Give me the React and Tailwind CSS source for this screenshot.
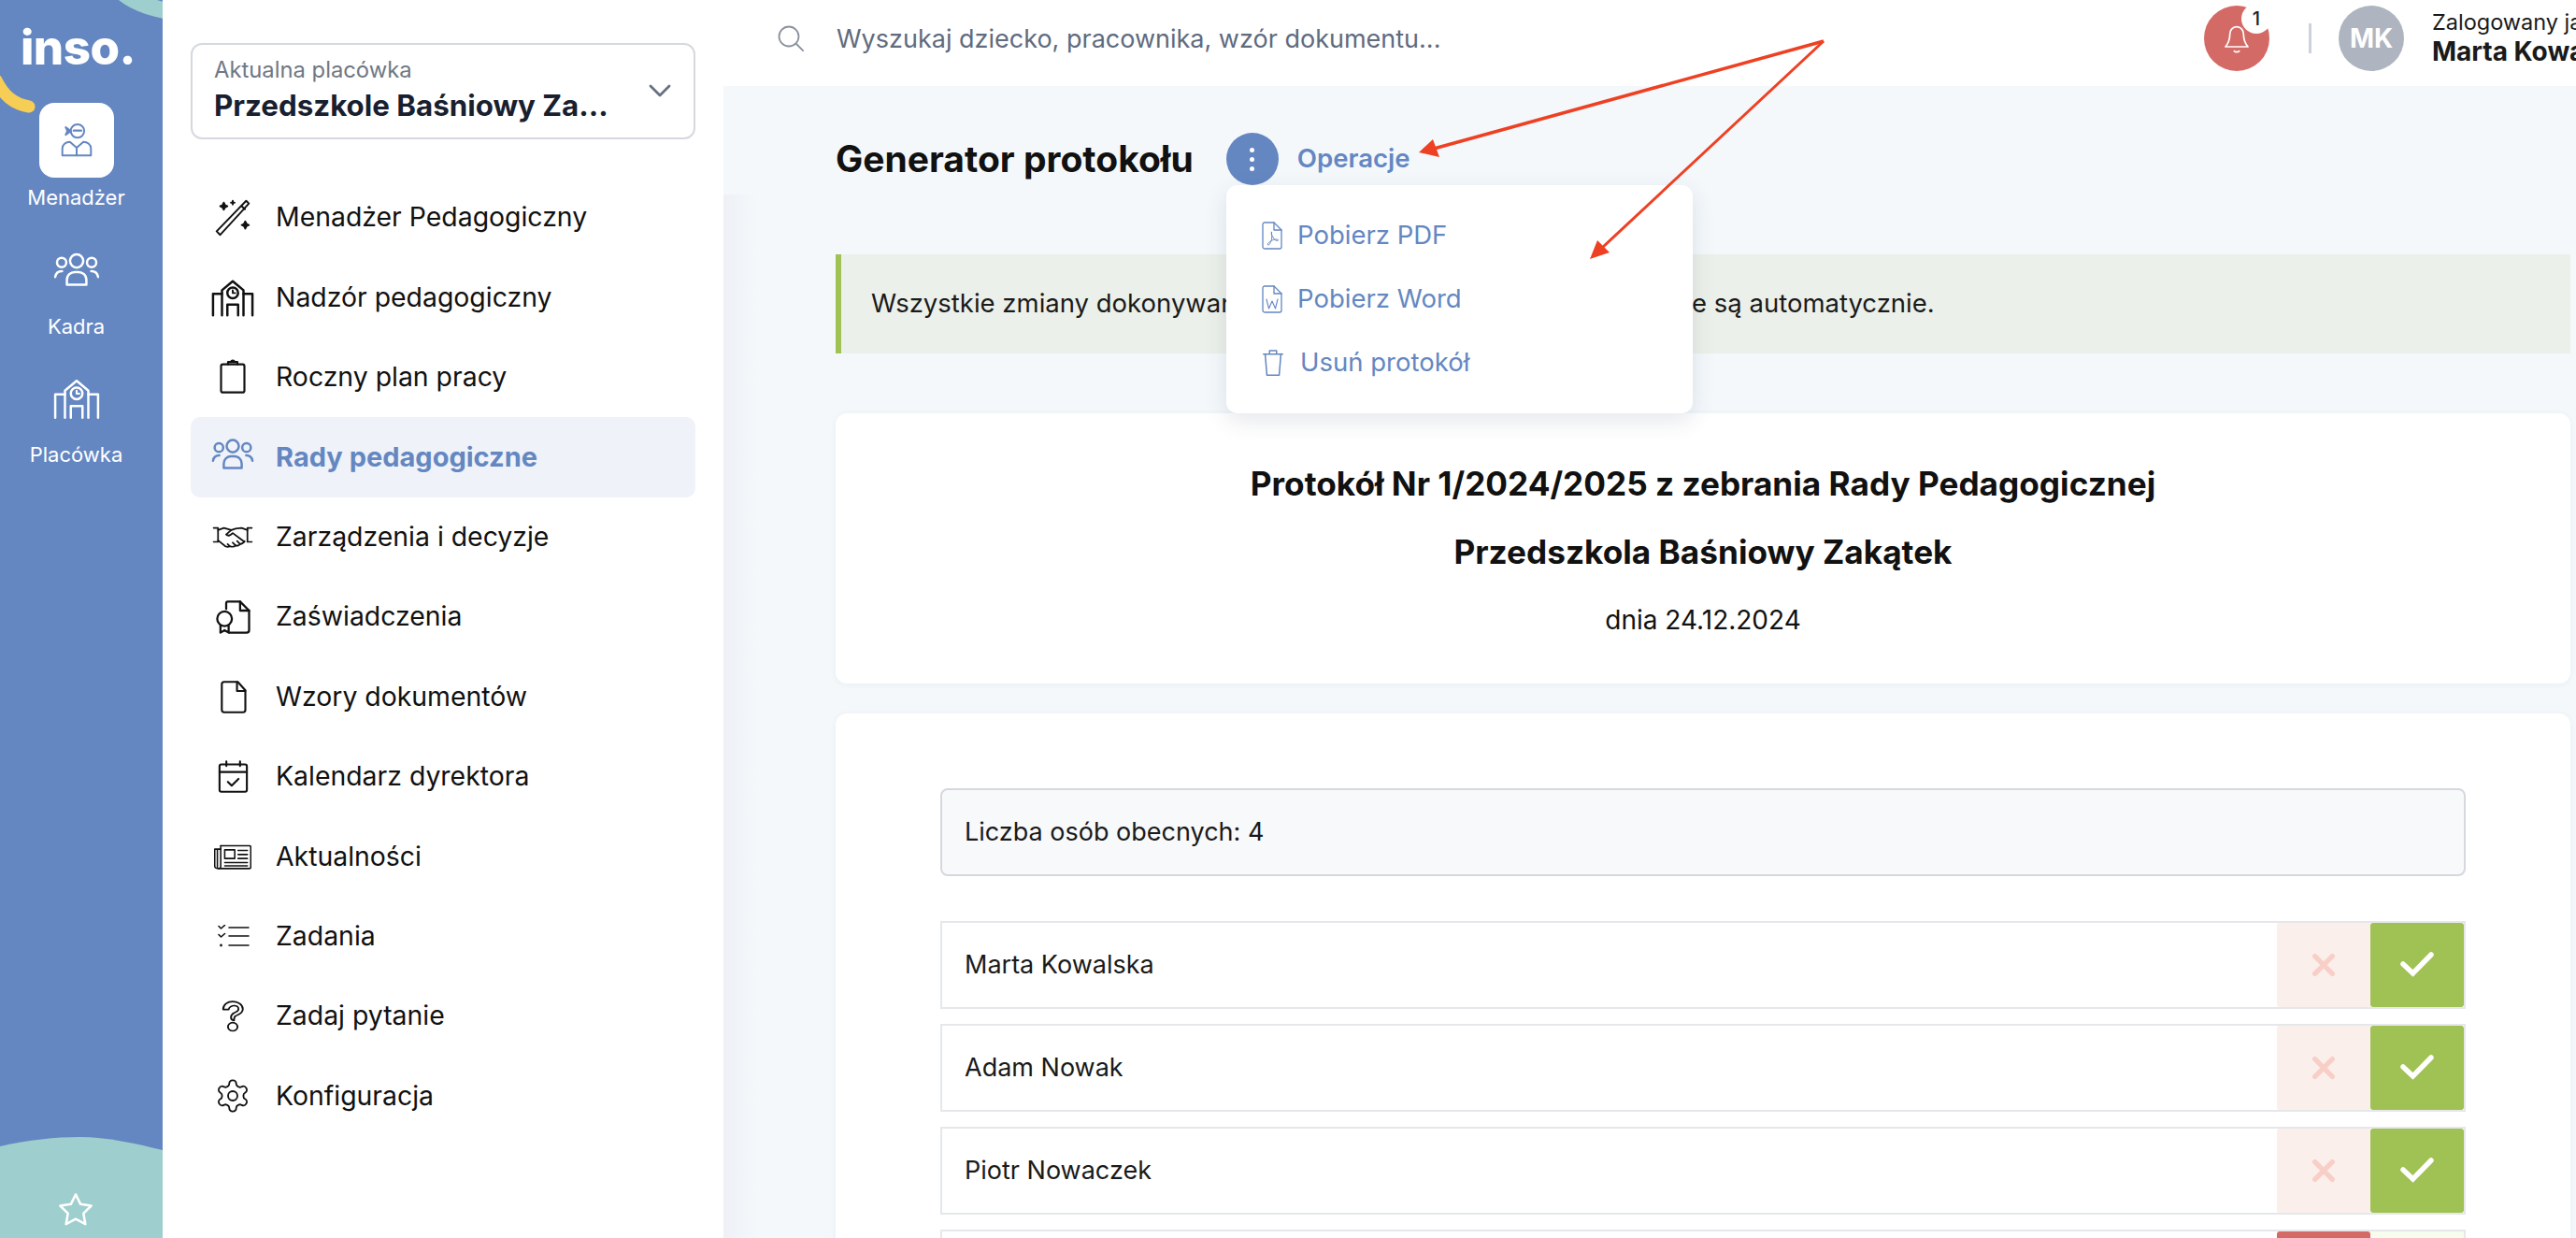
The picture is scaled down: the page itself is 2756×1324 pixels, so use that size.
import React from "react";

const font = { fontFamily: "Inter, 'Liberation Sans', sans-serif" };

const I = ({ children, className = "", vb = "0 0 24 24", sw = 1.3, par }) => (
  <svg viewBox={vb} preserveAspectRatio={par} fill="none" stroke="currentColor" strokeWidth={sw} strokeLinecap="round" strokeLinejoin="round" className={className}>
    {children}
  </svg>
);

const Wand = (p) => (
  <I {...p} sw={1}>
    <path d="M19.500 2.500 21 4 5 21.500 3 19.500Z" />
    <path d="M17 5.500 18.800 7.200" />
    <path d="M7 3.500c.3 1.300.7 1.700 2 2-1.300.3-1.700.7-2 2-.3-1.300-.7-1.700-2-2 1.300-.3 1.700-.7 2-2Z" fill="currentColor" />
    <path d="M12 2.500v2M11 3.500h2" />
    <path d="M19 14c.3 1.300.7 1.700 2 2-1.300.3-1.700.7-2 2-.3-1.300-.7-1.700-2-2 1.300-.3 1.700-.7 2-2Z" fill="currentColor" />
  </I>
);
const School = (p) => (
  <I {...p}>
    <path d="M1 22V10h5M23 22V10h-5" />
    <path d="M6 22V8l6-5 6 5v14" />
    <circle cx="12" cy="9.500" r="3" />
    <path d="M12 8v1.600h1.400" strokeWidth="1" />
    <path d="M9 22v-6h6v6" />
  </I>
);
const Users = (p) => (
  <I {...p}>
    <circle cx="12" cy="5.800" r="3.400" />
    <circle cx="4.300" cy="6.600" r="2.400" />
    <circle cx="19.700" cy="6.600" r="2.400" />
    <path d="M7 18v-2.500C7 13 9 11.500 11 11.500h2c2 0 4 1.500 4 4V18Z" />
    <path d="M1 14c.3-2 1.800-3 3.500-3M23 14c-.3-2-1.800-3-3.500-3" />
  </I>
);
const Clip = (p) => (
  <I {...p}>
    <rect x="4.500" y="4" width="15" height="18" rx="1.200" />
    <path d="M9 4V2.500h6V4" />
    <path d="M11 2.500c0-1.200 2-1.200 2 0" />
  </I>
);
const Hands = (p) => (
  <I {...p} vb="0 0 28 16" sw={1.100}>
    <path d="M1 2h3v9.500H1M27 2h-3v9.500h3" />
    <path d="M4 3.500 8 2l5 1.500-3.500 3c1.500 1.500 3 .5 4.500-1l8 6" />
    <path d="M24 3.500 20 2l-4 .5-3 1" />
    <path d="M4 10.500l5 4c1 .5 2 .5 3 0 1.500.5 3 .5 4-.5 1.500.3 2.500 0 3-1 1.500 0 2.500-1 3-2" />
    <path d="m12 14.500-1.500-1.500M16 14l-2-2M19 13l-2-2" />
  </I>
);
const Cert = (p) => (
  <I {...p}>
    <path d="M8 7V3.500c0-.5.5-1 1-1h7.500L22 8v12c0 .8-.5 1.500-1.500 1.500H10" />
    <path d="M16.500 2.500V8H22" />
    <circle cx="7" cy="13" r="4.500" />
    <path d="M4.500 17v4.500L7 20l2.500 1.500V17" />
  </I>
);
const Doc = (p) => (
  <I {...p}>
    <path d="M4.500 3.500c0-.8.5-1.500 1.500-1.500h9l5 5.500V20.500c0 1-.7 1.500-1.500 1.500H6c-1 0-1.500-.7-1.500-1.500Z" />
    <path d="M14.500 2v6H20" />
  </I>
);
const Cal = (p) => (
  <I {...p}>
    <rect x="3" y="4" width="18" height="18" rx="1.200" />
    <path d="M3 9h18M7.500 2v3M16.500 2v3" />
    <path d="m8.500 15.500 2.500 2.500 4.500-4.500" />
  </I>
);
const News = (p) => (
  <I {...p} vb="0 0 28 20" sw={1.100}>
    <path d="M5 2h21.500c.5 0 1 .5 1 1v15c0 .5-.5 1-1 1H3c-1.500 0-2.500-1-2.500-2V4.500h4.500" />
    <path d="M5 2v15.500c0 1-1 1.500-1.500 1.500M2.500 5v13" />
    <rect x="8" y="5" width="7.500" height="6.500" />
    <path d="M18 5.500h7M18 8.500h7M18 11.500h7M8 14.500h17M8 17h17" />
  </I>
);
const Tasks = (p) => (
  <I {...p} vb="0 0 35 24" sw={1.600}>
    <path d="M13 3h21M13 12h21M13 22h21" />
    <path d="m2 1.500 2.500 2.500 4-3.500M2 10.500l2.500 2.500 4-3.500" />
    <circle cx="4.500" cy="22" r=".6" fill="currentColor" />
  </I>
);
const Quest = (p) => (
  <I {...p} vb="5 1 14 23" par="none" sw={1.100}>
    <path d="M6 7.500C6 4 8.700 1.800 12 1.800s6.300 2.100 6.300 5.400c0 3-2.800 4-4.500 5-1 .6-1 1.500-1 3.300-1.500-.1-1.900-1-1.900-2.300 0-1.500.7-2.400 2-3.200 1-.6 2.700-1.300 2.700-2.800 0-1.600-1.300-2.500-2.700-2.500S9.500 5.800 9.500 7.500Z" />
    <circle cx="12" cy="20" r="3" />
  </I>
);
const Gear = (p) => (
  <I {...p} sw={1.100}>
    <path d="M12.220 2h-.44a2 2 0 0 0-2 2v.18a2 2 0 0 1-1 1.730l-.43.25a2 2 0 0 1-2 0l-.15-.08a2 2 0 0 0-2.730.73l-.22.380a2 2 0 0 0 .73 2.730l.15.100a2 2 0 0 1 1 1.720v.510a2 2 0 0 1-1 1.740l-.15.090a2 2 0 0 0-.73 2.730l.22.380a2 2 0 0 0 2.730.730l.15-.080a2 2 0 0 1 2 0l.43.250a2 2 0 0 1 1 1.730V20a2 2 0 0 0 2 2h.44a2 2 0 0 0 2-2v-.18a2 2 0 0 1 1-1.730l.43-.25a2 2 0 0 1 2 0l.15.080a2 2 0 0 0 2.730-.730l.22-.390a2 2 0 0 0-.73-2.730l-.15-.080a2 2 0 0 1-1-1.740v-.500a2 2 0 0 1 1-1.740l.15-.090a2 2 0 0 0 .73-2.730l-.22-.380a2 2 0 0 0-2.730-.730l-.15.080a2 2 0 0 1-2 0l-.43-.250a2 2 0 0 1-1-1.730V4a2 2 0 0 0-2-2z" />
    <circle cx="12" cy="12" r="3" />
  </I>
);

const nav = [
  ["Menadżer Pedagogiczny", Wand, "w-[46px] h-[46px]"],
  ["Nadzór pedagogiczny", School, "w-[46px] h-[46px]"],
  ["Roczny plan pracy", Clip, "w-[40px] h-[40px]"],
  ["Rady pedagogiczne", Users, "w-[46px] h-[46px]"],
  ["Zarządzenia i decyzje", Hands, "w-[44px] h-[26px]"],
  ["Zaświadczenia", Cert, "w-[42px] h-[42px]"],
  ["Wzory dokumentów", Doc, "w-[39px] h-[39px]"],
  ["Kalendarz dyrektora", Cal, "w-[39px] h-[39px]"],
  ["Aktualności", News, "w-[40px] h-[30px]"],
  ["Zadania", Tasks, "w-[35px] h-[24px]"],
  ["Zadaj pytanie", Quest, "w-[24px] h-[34px]"],
  ["Konfiguracja", Gear, "w-[40px] h-[40px]"],
];

const X = ({ className }) => (
  <svg viewBox="0 0 24 24" fill="none" stroke="currentColor" strokeWidth="4.600" strokeLinecap="round" className={className}>
    <path d="M4 4 20 20M20 4 4 20" />
  </svg>
);
const Check = ({ className }) => (
  <svg viewBox="0 0 36 28" fill="none" stroke="currentColor" strokeWidth="5.500" strokeLinecap="round" strokeLinejoin="miter" className={className}>
    <path d="M3 14 13.500 24 33 4" />
  </svg>
);

const Row = ({ name }) => (
  <div className="flex h-[94px] items-stretch border-2 border-[#E6E7EB] bg-white">
    <div className="flex-1 flex items-center pl-[24px] text-[27px] text-[#1a1a1a]">{name}</div>
    <div className="w-[100px] bg-[#FBEFEC] flex items-center justify-center text-[#F8CFC7] rounded-l-[2px]">
      <X className="w-[28px] h-[28px]" />
    </div>
    <div className="w-[100px] bg-[#A0C154] flex items-center justify-center text-white rounded-[3px]">
      <Check className="w-[36px] h-[28px] -mt-[2px]" />
    </div>
  </div>
);

export default function App() {
  return (
    <div style={font} className="relative flex h-[1324px] w-[2756px] overflow-hidden bg-[#F4F8FB]">
      {/* rail */}
      <aside className="relative w-[174px] shrink-0 overflow-hidden bg-[#6487C2] text-white flex flex-col items-center pr-[11px]">
        <div className="absolute -top-[100px] left-[105px] h-[122px] w-[190px] rounded-[50%] border-[18px] border-[#9ECECD] border-t-0" />
        <svg className="absolute left-0 top-[80px] w-[40px] h-[44px]" viewBox="0 0 40 44" fill="none">
          <path d="M-4 6C4 22 14 31 31 34" stroke="#F6CE55" strokeWidth="13" strokeLinecap="round" />
        </svg>
        <svg className="absolute left-0 bottom-0 w-[174px] h-[108px]" viewBox="0 0 174 108" preserveAspectRatio="none">
          <path d="M0 10C30 3 60 0 85 0c30 0 60 7 89 14v94H0Z" fill="#9ECECD" />
        </svg>
        <div className="relative text-[51px] leading-none font-extrabold mt-[25px] h-[46px] tracking-[-0.5px] pl-[4px]">inso.</div>
        <div className="relative mt-[39px] w-[80px] h-[80px] rounded-[16px] bg-white flex items-center justify-center text-[#6487C2]">
          <svg viewBox="0 0 40 40" className="w-[36px] h-[40px]" fill="none" stroke="currentColor" strokeWidth="2.200" strokeLinejoin="round" strokeLinecap="round">
            <circle cx="21" cy="9" r="8" />
            <path d="M16.500 8.500h9" strokeWidth="2.600" />
            <path d="M13 9 7 4.500l2 4.500-2 4.500Z" fill="currentColor" />
            <path d="M3 38V30c0-5 4-8 9-8l8 7 8-7c5 0 9 3 9 8v8Z" />
            <path d="M20 29v9" />
          </svg>
        </div>
        <div className="relative mt-[7px] text-[22px] leading-[28px]">Menadżer</div>
        <Users className="relative mt-[42px] w-[50px] h-[50px] block" sw={1.200} />
        <div className="relative mt-[18px] text-[22px] leading-[28px]">Kadra</div>
        <School className="relative mt-[38px] w-[50px] h-[50px] block" sw={1.200} />
        <div className="relative mt-[21px] text-[22px] leading-[28px]">Placówka</div>
        <svg viewBox="0 0 24 24" className="absolute left-[60px] bottom-[10px] w-[42px] h-[40px]" fill="none" stroke="#fff" strokeWidth="1.500" strokeLinejoin="round">
          <path d="m12 2 3.100 6.300 6.900 1-5 4.900 1.200 6.900-6.200-3.300-6.200 3.300L7 14.200 2 9.300l6.900-1z" />
        </svg>
      </aside>

      {/* sidebar */}
      <nav className="w-[600px] shrink-0 bg-white pt-[46px] px-[30px]">
        <div className="h-[103px] rounded-[12px] border-2 border-[#D5D9DF] flex items-center justify-between pl-[23px] pr-[24px]">
          <div>
            <div className="text-[23.800px] leading-[30px] -mt-[3px] text-[#6F7885]">Aktualna placówka</div>
            <div className="text-[31.300px] leading-[40px] mt-[3px] font-bold text-[#182030]">Przedszkole Baśniowy Za...</div>
          </div>
          <svg viewBox="0 0 24 14" className="w-[24px] h-[14px] text-[#667080] -mt-[2px]" fill="none" stroke="currentColor" strokeWidth="2.800" strokeLinecap="round" strokeLinejoin="round">
            <path d="M2 2 12 12 22 2" />
          </svg>
        </div>
        <div className="mt-[41px] flex flex-col">
          {nav.map(([t, Ic, cl]) => {
            const active = t === "Rady pedagogiczne";
            return (
              <div key={t} className={`h-[85.400px] rounded-[10px] flex items-center ${active ? "bg-[#EFF2F8] text-[#6487C2] font-bold" : "text-[#111]"}`}>
                <div className="w-[91px] pr-[1px] flex items-center justify-center">
                  <Ic className={cl} />
                </div>
                <span className={active ? "text-[29px]" : "text-[28.400px]"}>{t}</span>
              </div>
            );
          })}
        </div>
      </nav>

      {/* main */}
      <div className="relative flex-1 min-w-0 flex flex-col">
        <div className="absolute left-0 top-[208px] bottom-0 w-[36px] bg-[linear-gradient(to_right,#EEF0F5,#F4F8FB)]" />
        <header className="relative h-[92px] shrink-0 bg-white flex items-center pl-[58px]">
          <svg viewBox="0 0 28 28" className="w-[28px] h-[28px] -mt-[10px] text-[#8B929D]" fill="none" stroke="currentColor" strokeWidth="1.800" strokeLinecap="round">
            <circle cx="12" cy="12" r="10.500" />
            <path d="m20 20 7.500 7.500" />
          </svg>
          <span className="ml-[35px] -mt-[8px] text-[27px] text-[#5F6B7E]">Wyszukaj dziecko, pracownika, wzór dokumentu...</span>
          <div className="relative ml-auto w-[70px] h-[70px] rounded-full bg-[#D46A65] flex items-center justify-center text-white -mt-[10px]">
            <svg viewBox="0 0 24 24" className="w-[32px] h-[32px] mt-[2px]" fill="none" stroke="currentColor" strokeWidth="1.300" strokeLinecap="round" strokeLinejoin="round">
              <path d="M12 2c-3.500 0-5.500 2.800-5.500 6 0 5-1.500 7.500-3.500 10h18c-2-2.500-3.500-5-3.500-10 0-3.200-2-6-5.500-6Z" />
              <path d="M10 21.500c1 1 3 1 4 0" />
            </svg>
            <div className="absolute -top-[2px] right-[-2px] w-[32px] h-[32px] rounded-full bg-white text-[#222] text-[20px] font-medium flex items-center justify-center">1</div>
          </div>
          <div className="ml-[42px] w-[3px] h-[32px] -mt-[10px] bg-[#CBD2DC]" />
          <div className="ml-[29px] w-[70px] h-[70px] -mt-[10px] rounded-full bg-[#AEB5C0] text-white font-bold text-[28px] flex items-center justify-center">MK</div>
          <div className="ml-[30px] w-[154px] shrink-0 -mt-[12px] whitespace-nowrap">
            <div className="text-[23.500px] leading-[30px] text-[#1a1a1a]">Zalogowany jako</div>
            <div className="text-[28px] leading-[32px] font-bold text-[#1a1a1a]">Marta Kowalska</div>
          </div>
        </header>

        <main className="relative pl-[120px] pr-[6px] flex-1 min-h-0">
          <div className="relative h-[180px] flex items-start">
            <div className="flex items-center h-[56px] mt-[50px]">
              <h1 className="text-[39px] font-bold text-[#111]">Generator protokołu</h1>
              <div className="ml-[35px] w-[56px] h-[56px] rounded-full bg-[#6487C2] flex flex-col gap-[5px] items-center justify-center">
                <i className="block w-[5px] h-[5px] rounded-full bg-white" />
                <i className="block w-[5px] h-[5px] rounded-full bg-white" />
                <i className="block w-[5px] h-[5px] rounded-full bg-white" />
              </div>
              <span className="ml-[20px] text-[27.600px] font-semibold text-[#6487C2]">Operacje</span>
            </div>
            <div className="absolute z-10 left-[418px] top-[106px] w-[499px] h-[244px] rounded-[12px] bg-white shadow-[0_8px_24px_rgba(40,60,90,0.12)] pl-[38px] pt-[20px] text-[#6487C2] text-[27.500px]">
              <div className="h-[68px] flex items-center gap-[16px]">
                <FileIcon label="pdf" />
                <span>Pobierz PDF</span>
              </div>
              <div className="h-[68px] flex items-center gap-[16px]">
                <FileIcon label="W" />
                <span>Pobierz Word</span>
              </div>
              <div className="h-[68px] flex items-center gap-[17px]">
                <svg viewBox="0 0 24 32" className="w-[24px] h-[30px]" fill="none" stroke="currentColor" strokeWidth="1.600" strokeLinecap="round" strokeLinejoin="round">
                  <path d="M1 6h22M3 6l2 24h14l2-24M8 6V2h8v4" />
                </svg>
                <span>Usuń protokół</span>
              </div>
            </div>
          </div>

          <div className="h-[106px] border-l-[6px] border-[#A0C154] bg-[#ECF0EA] flex items-center pl-[32px] text-[27.500px] text-[#1a1a1a] whitespace-nowrap">
            Wszystkie zmiany dokonywane w generatorze protokołu zapisywane są automatycznie.
          </div>

          <section className="mt-[64px] h-[289px] rounded-[12px] bg-white shadow-[0_1px_6px_rgba(40,60,90,0.06)] flex flex-col items-center text-[#111]">
            <h2 className="mt-[52px] text-[35.200px] leading-[46px] font-bold">Protokół Nr 1/2024/2025 z zebrania Rady Pedagogicznej</h2>
            <h2 className="mt-[27px] text-[35.200px] leading-[46px] font-bold">Przedszkola Baśniowy Zakątek</h2>
            <p className="mt-[34px] text-[28px] leading-[32px]">dnia 24.12.2024</p>
          </section>

          <section className="mt-[32px] h-[800px] rounded-t-[12px] bg-white shadow-[0_1px_6px_rgba(40,60,90,0.06)] pt-[80px] pl-[112px] pr-[112px]">
            <div className="h-[94px] rounded-[8px] border-2 border-[#D5D8DE] bg-[#F8F9FB] flex items-center pl-[24px] text-[27px] text-[#1a1a1a]">
              Liczba osób obecnych: 4
            </div>
            <div className="mt-[48px] flex flex-col gap-[16px]">
              <Row name="Marta Kowalska" />
              <Row name="Adam Nowak" />
              <Row name="Piotr Nowaczek" />
              <div className="flex h-[94px] items-stretch border-2 border-[#E6E7EB] bg-white">
                <div className="flex-1" />
                <div className="w-[100px] bg-[#D46A65] rounded-[3px]" />
                <div className="w-[100px] bg-[#F6FCEE]" />
              </div>
            </div>
          </section>
        </main>
      </div>

      {/* annotation arrows */}
      <svg className="absolute inset-0 z-20 pointer-events-none" width="2756" height="1324" fill="none">
        <path d="M1951 44 1534 159" stroke="#EE4023" strokeWidth="3.500" />
        <path d="M1518 163 1533 149 1540 168Z" fill="#EE4023" />
        <path d="M1951 44 1714 265" stroke="#EE4023" strokeWidth="3" />
        <path d="M1701 277 1709 257 1722 270Z" fill="#EE4023" />
      </svg>
    </div>
  );
}

function FileIcon({ label }) {
  return (
    <svg viewBox="0 0 22 30" className="w-[22px] h-[30px]" fill="none" stroke="currentColor" strokeWidth="1.300" strokeLinejoin="round" strokeLinecap="round">
      <path d="M1 3c0-1 .8-2 2-2h10l8 8v18c0 1-.8 2-2 2H3c-1.200 0-2-1-2-2Z" />
      <path d="M13 1v8h8" />
      {label === "pdf" ? (
        <path d="M10.500 11c-1.500 0 .5 5 3 8 1.500 1.500 4 2 4 .8s-3-1-6 0c-3 1.200-6 4-5 5.200 1 1 3-2.500 4-6 .5-2-.5-8 0-8Z" strokeWidth="1" />
      ) : (
        <path d="M5 15l2.500 10L11 17l3.500 8L17 15" strokeWidth="1.100" />
      )}
    </svg>
  );
}
